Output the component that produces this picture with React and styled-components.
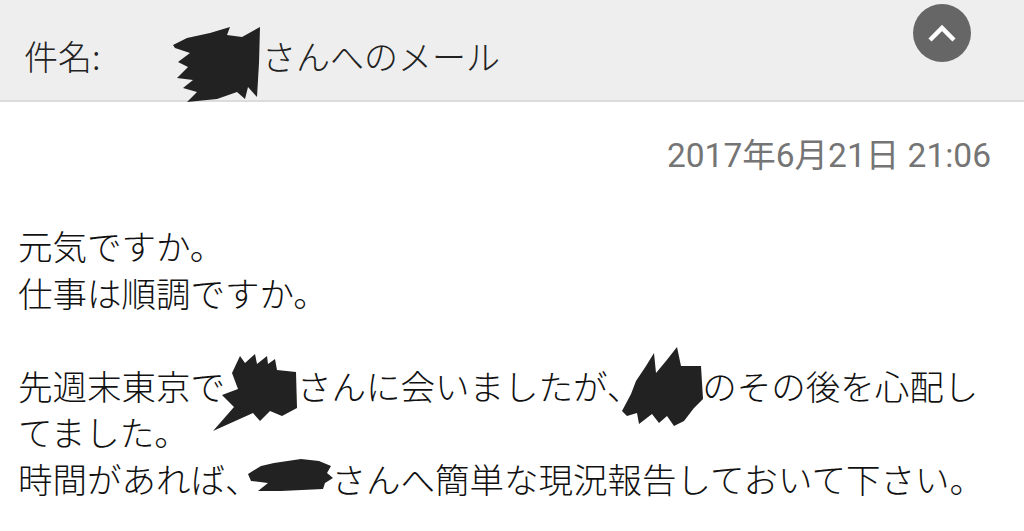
import React from "react"
import styled, { createGlobalStyle } from "styled-components"

const GlobalStyle = createGlobalStyle`
  html, body {
    margin: 0;
    padding: 0;
    background: #ffffff;
  }
  body {
    font-family: "Noto Sans CJK JP", "Noto Sans", sans-serif;
    color: #111;
  }
`

const Page = styled.div`
  width: 1024px;
  height: 531px;
  overflow: hidden;
  background: #fff;
`

const Header = styled.header`
  display: flex;
  align-items: flex-start;
  box-sizing: border-box;
  height: 102px;
  padding: 4px 53px 0 24px;
  background: #eeeeee;
  border-bottom: 2px solid #dcdcdc;
`

const Subject = styled.div`
  margin-top: 29px;
  font-size: 34px;
  font-weight: 300;
  line-height: 46px;
  color: #222;
  white-space: nowrap;
`

const Label = styled.span`
  display: inline-block;
  width: 150px;
`

const CollapseButton = styled.button`
  margin-left: auto;
  width: 58px;
  height: 58px;
  padding: 0;
  border: none;
  border-radius: 50%;
  background: #666666;
  display: flex;
  align-items: center;
  justify-content: center;
  cursor: pointer;
`

const DateRow = styled.div`
  margin-top: 31px;
  padding-right: 33px;
  text-align: right;
  font-family: Roboto, "Noto Sans CJK JP", sans-serif;
  font-size: 33.5px;
  line-height: 46px;
  color: #757575;
`

const Body = styled.div`
  padding: 43px 0 0 18px;
  font-size: 34.5px;
  font-weight: 300;
  line-height: 46.5px;
  color: #111;
`

const Line = styled.div`
  white-space: nowrap;
  height: 46.5px;
`

const Hidden = styled.span`
  position: relative;
  display: inline-block;
  width: ${p => p.$w}px;
  height: 46.5px;
  vertical-align: top;
`

const Scribble = styled.svg`
  position: absolute;
  left: ${p => p.$x}px;
  top: ${p => p.$y}px;
  overflow: visible;
`

const Redact = ({ w, x, y, width, height, points }) => (
  <Hidden $w={w}>
    <Scribble $x={x} $y={y} width={width} height={height} viewBox={`0 0 ${width} ${height}`}>
      <polygon points={points} fill="#222" />
    </Scribble>
  </Hidden>
)

const nameMark =
  "1,20 15,13 38,8 58,2 55,10 70,12 88,2 87,38 85,72 76,62 73,74 65,67 45,74 15,77 25,67 11,63 21,55 5,53 16,42 6,37 18,28 3,23"
const markA =
  "30,7 35,14 45,5 47,15 57,7 58,15 65,10 67,21 86,23 87,59 72,67 60,62 50,72 43,64 3,82 24,58 12,46 28,40 22,24"
const markB =
  "3,66 12,49 17,36 27,21 35,8 37,28 47,16 58,2 62,21 82,21 84,54 75,63 65,76 55,81 48,71 40,78 33,69 20,79 18,68 8,71"
const markC =
  "3,18 16,10 29,7 56,3 74,5 86,10 82,17 88,22 80,27 78,33 36,35 13,35 23,27 6,25"

const Chevron = () => (
  <svg width="58" height="58" viewBox="0 0 58 58">
    <polyline
      points="17,36 29,24 41,36"
      fill="none"
      stroke="#fff"
      strokeWidth="4.5"
    />
  </svg>
)

export default function App() {
  return (
    <Page>
      <GlobalStyle />
      <Header>
        <Subject>
          <Label>件名:</Label>
          <Redact w={88} x={-2} y={-8} width={92} height={78} points={nameMark} />
          さんへのメール
        </Subject>
        <CollapseButton aria-label="閉じる">
          <Chevron />
        </CollapseButton>
      </Header>
      <DateRow>2017年6月21日 21:06</DateRow>
      <Body>
        <Line>元気ですか。</Line>
        <Line>仕事は順調ですか。</Line>
        <Line />
        <Line>
          先週末東京で
          <Redact w={72} x={-15} y={-13} width={88} height={86} points={markA} />
          さんに会いましたが、
          <Redact w={61} x={-22} y={-17} width={86} height={84} points={markB} />
          のその後を心配し
        </Line>
        <Line>てました。</Line>
        <Line>
          時間があれば、
          <Redact w={72} x={-15} y={1} width={90} height={40} points={markC} />
          さんへ簡単な現況報告しておいて下さい。
        </Line>
      </Body>
    </Page>
  )
}
